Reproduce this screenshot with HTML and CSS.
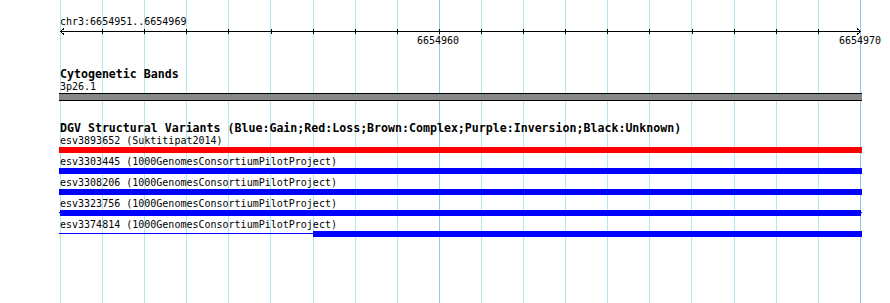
FILE: index.html
```html
<!DOCTYPE html>
<html>
<head>
<meta charset="utf-8">
<title>Genome browser</title>
<link rel="stylesheet" href="styles.css">
</head>
<body>
<div class="canvas">
  <div class="grid">
    <span class="gl"></span><span class="gl"></span><span class="gl"></span><span class="gl"></span><span class="gl"></span>
    <span class="gl"></span><span class="gl"></span><span class="gl"></span><span class="gl"></span><span class="gl major"></span>
    <span class="gl"></span><span class="gl"></span><span class="gl"></span><span class="gl"></span><span class="gl"></span>
    <span class="gl"></span><span class="gl"></span><span class="gl"></span><span class="gl"></span><span class="gl major"></span>
  </div>
  <div class="content">
    <div class="ruler">
      <div class="pos">chr3:6654951..6654969</div>
      <svg class="axis" width="890" height="8" viewBox="0 0 890 8">
        <path d="M60 4.5H861" />
        <path d="M64 1.5L60.5 4.5L64 7.5M857 1.5L860.5 4.5L857 7.5" />
        <path d="M102.5 2V7M144.5 2V7M186.5 2V7M228.5 2V7M271.5 2V7M313.5 2V7M355.5 2V7M397.5 2V7M439.5 2V7M481.5 2V7M523.5 2V7M565.5 2V7M607.5 2V7M649.5 2V7M692.5 2V7M734.5 2V7M776.5 2V7M818.5 2V7" />
      </svg>
      <div class="nums">
        <span class="num n1">6654960</span>
        <span class="num n2">6654970</span>
      </div>
    </div>

    <section class="track cyto">
      <div class="title">Cytogenetic Bands</div>
      <div class="label first">3p26.1</div>
      <div class="band"></div>
    </section>

    <section class="track dgv">
      <div class="title short">DGV Structural Variants (Blue:Gain;Red:Loss;Brown:Complex;Purple:Inversion;Black:Unknown)</div>
      <div class="feat">
        <div class="label">esv3893652 (Suktitipat2014)</div>
        <div class="bar"><span class="thick red"></span></div>
      </div>
      <div class="feat">
        <div class="label">esv3303445 (1000GenomesConsortiumPilotProject)</div>
        <div class="bar"><span class="thick blue"></span></div>
      </div>
      <div class="feat">
        <div class="label">esv3308206 (1000GenomesConsortiumPilotProject)</div>
        <div class="bar"><span class="thick blue"></span></div>
      </div>
      <div class="feat">
        <div class="label">esv3323756 (1000GenomesConsortiumPilotProject)</div>
        <div class="bar"><span class="stem blue"></span><span class="thick blue"></span><span class="stem blue"></span></div>
      </div>
      <div class="feat">
        <div class="label">esv3374814 (1000GenomesConsortiumPilotProject)</div>
        <div class="bar"><span class="stem long blue"></span><span class="thick blue"></span></div>
      </div>
    </section>
  </div>
</div>
</body>
</html>
```

FILE: styles.css
```css
html, body {
  margin: 0;
  padding: 0;
  background: #ffffff;
}

body {
  font-family: "DejaVu Sans Mono", "Liberation Mono", monospace;
  color: #000000;
}

.canvas {
  position: relative;
  width: 890px;
  height: 303px;
  overflow: hidden;
}

/* base-position guidelines behind the tracks */
.grid {
  position: absolute;
  left: 60px;
  top: 0;
  width: 801px;
  height: 303px;
  display: flex;
  justify-content: space-between;
  z-index: 0;
}

.gl {
  display: block;
  width: 1px;
  height: 100%;
  background: #aee9ef;
}

.gl.major {
  background: #8ecbea;
}

.content {
  position: relative;
  z-index: 1;
}

/* ruler */
.ruler {
  padding-top: 16px;
}

.pos {
  margin-left: 60px;
  font-size: 10px;
  line-height: 11px;
  height: 11px;
  white-space: nowrap;
}

.axis {
  display: block;
  fill: none;
  stroke: #000000;
  stroke-width: 1;
  shape-rendering: crispEdges;
}

.nums {
  position: relative;
  height: 11px;
  font-size: 10px;
  line-height: 11px;
}

.num {
  position: absolute;
  top: 0;
  white-space: nowrap;
}

.n1 { left: 417px; }
.n2 { left: 839px; }

/* tracks */
.cyto {
  margin-top: 22px;
}

.title {
  margin-left: 60px;
  font-weight: bold;
  font-size: 11.6px;
  line-height: 12px;
  height: 12px;
  white-space: nowrap;
}

.title.short {
  height: 10px;
}

.label {
  margin-left: 60px;
  font-size: 10px;
  line-height: 11px;
  height: 11px;
  white-space: nowrap;
}

.label.first {
  margin-top: 1px;
}

.band {
  margin-top: 1px;
  margin-left: 59px;
  width: 803px;
  height: 8px;
  box-sizing: border-box;
  background: #878787;
  border-top: 1px solid #000000;
  border-bottom: 1px solid #000000;
}

.dgv {
  margin-top: 21px;
}

.feat .label {
  margin-top: 3px;
}

.bar {
  display: flex;
  align-items: flex-start;
  margin-top: 1px;
  margin-left: 59px;
  width: 803px;
  height: 6px;
}

.thick {
  display: block;
  flex: 1;
  height: 6px;
}

.stem {
  display: block;
  width: 1px;
  height: 1px;
  margin-top: 2px;
}

.stem.long {
  width: 254px;
}

.red { background: #ff0000; }
.blue { background: #0000ff; }
```
